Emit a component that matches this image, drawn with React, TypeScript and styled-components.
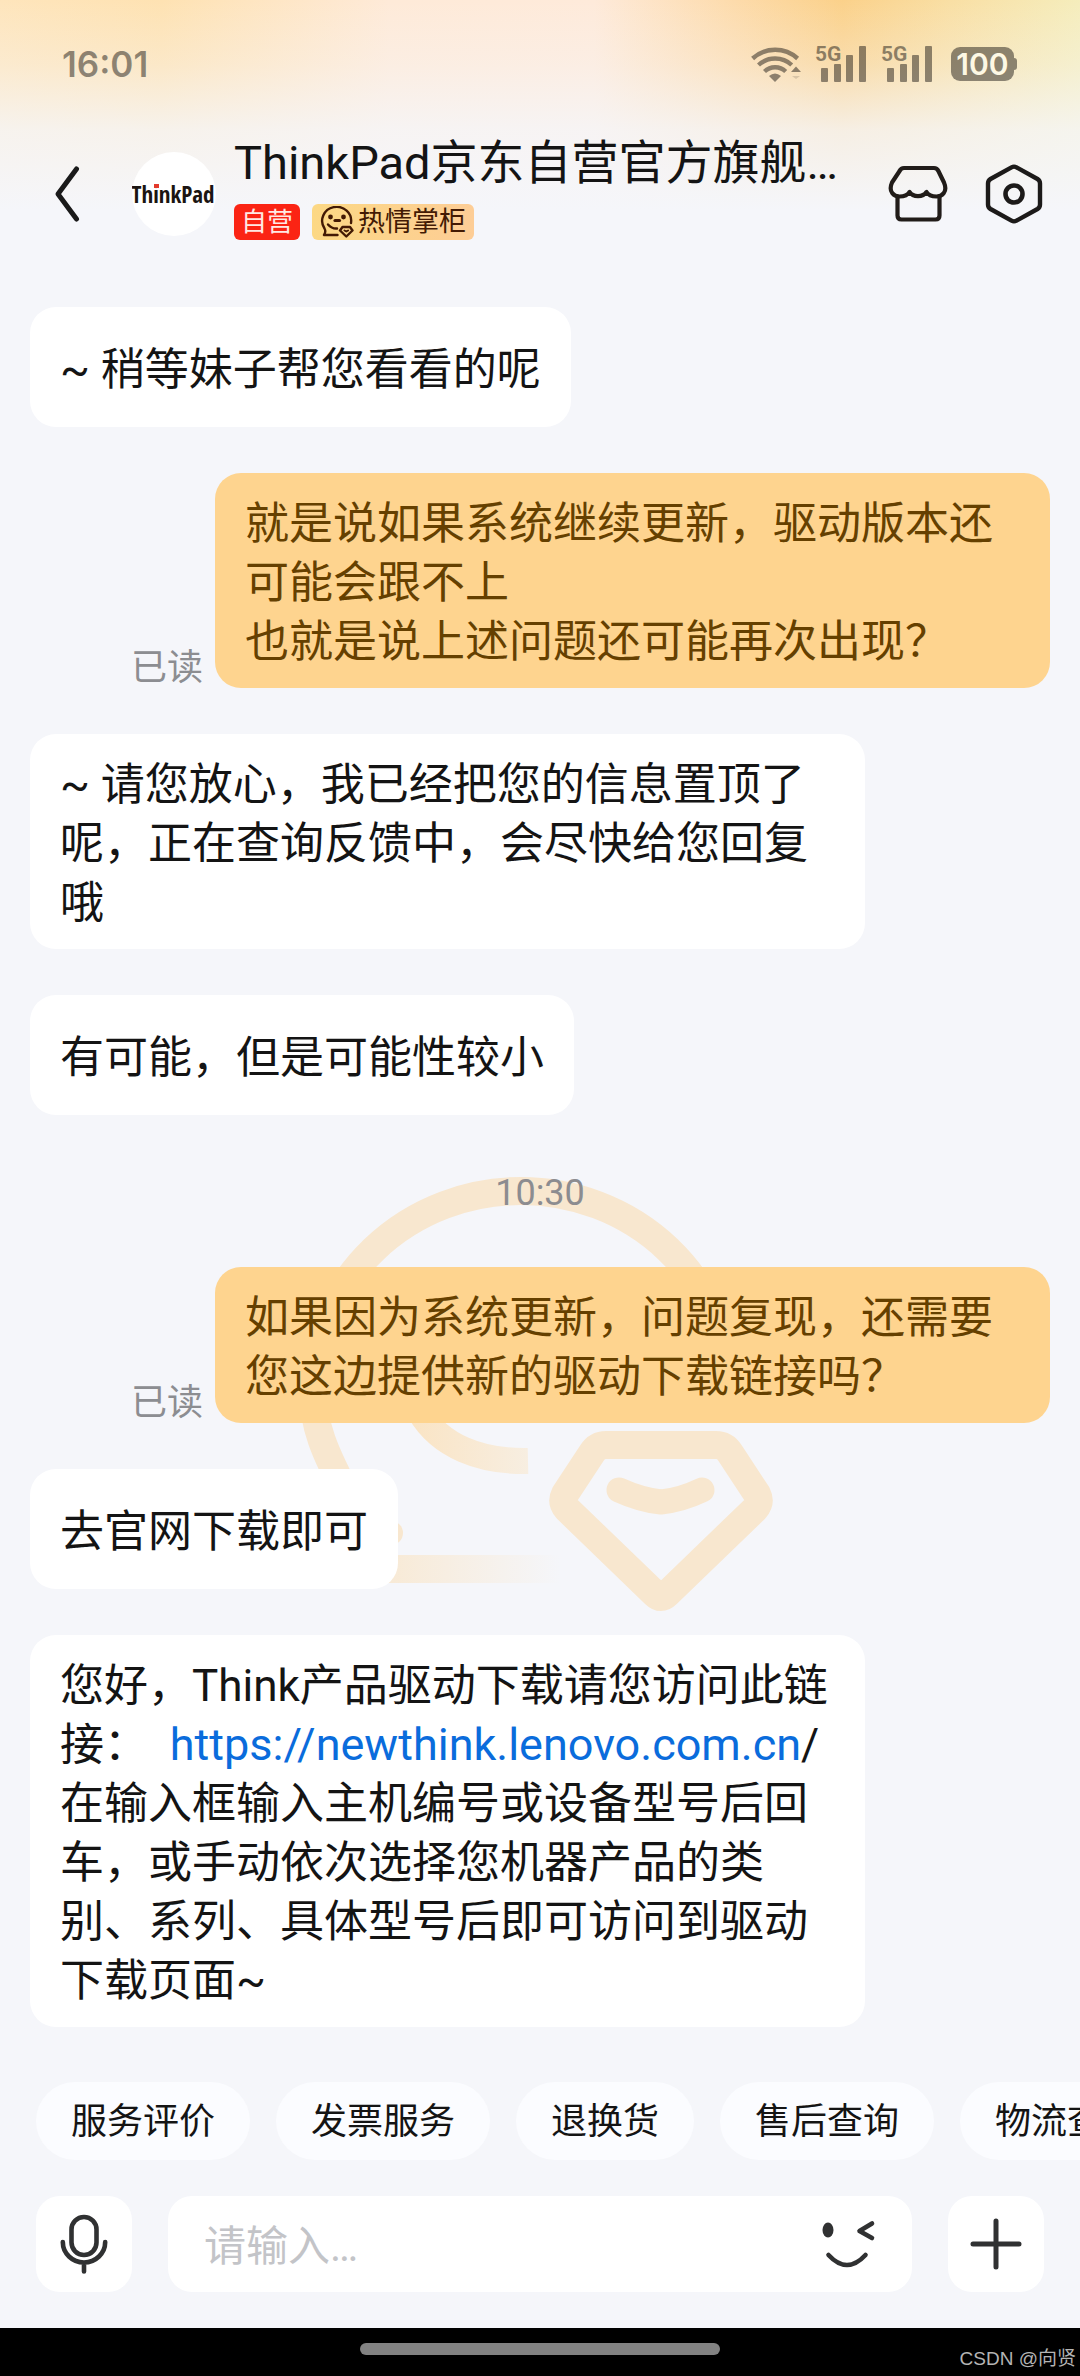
import React from "react";
import styled, { createGlobalStyle } from "styled-components";

const fontStack = `Roboto, "Noto Sans CJK SC", sans-serif`;
const statusInk = "rgba(32, 28, 24, 0.5)";

const GlobalStyle = createGlobalStyle`
  *, *::before, *::after { box-sizing: border-box; }
  body {
    margin: 0;
    background: #f5f6fa;
    font-family: ${fontStack};
    color: #141414;
  }
  button, input { font: inherit; color: inherit; }
`;

const Screen = styled.div`
  position: relative;
  display: flex;
  flex-direction: column;
  min-height: 100vh;
  overflow: hidden;
`;

const Top = styled.header`
  background:
    linear-gradient(to bottom, rgba(245, 246, 250, 0) 0, rgba(245, 246, 250, 0.3) 64px, rgba(245, 246, 250, 0.8) 130px, #f5f6fa 210px),
    linear-gradient(to right, #fee5bc 0%, #fee2b2 15%, #feead8 36%, #feeada 55%, #fddbab 68%, #fbd18a 78%, #f9dfa4 88%, #f5edbc 100%);
`;

const StatusBar = styled.div`
  display: flex;
  align-items: center;
  justify-content: space-between;
  height: 128px;
  padding: 0 66px 0 62px;
  color: ${statusInk};
`;

const Clock = styled.time`
  font: 600 35px/40px Inter, sans-serif;
`;

const StatusIcons = styled.div`
  display: flex;
  align-items: center;
`;

const Signal = styled.svg`
  display: block;
  margin-left: 12px;
  overflow: visible;
`;

const Battery = styled.span`
  position: relative;
  margin-left: 16px;
  width: 63px;
  height: 34px;
  border-radius: 9px;
  background: ${statusInk};
  color: #fdf8e4;
  font: 600 30px/34px Inter, sans-serif;
  text-align: center;

  &::after {
    content: "";
    position: absolute;
    top: 11px;
    right: -3px;
    width: 3px;
    height: 12px;
    border-radius: 0 3px 3px 0;
    background: ${statusInk};
  }
`;

const TitleBar = styled.div`
  display: flex;
  align-items: center;
  height: 132px;
  padding: 0 36px 0 54px;
`;

const BareButton = styled.button`
  flex: none;
  display: grid;
  place-items: center;
  padding: 0;
  border: 0;
  background: none;
  cursor: pointer;

  svg { display: block; }
`;

const Avatar = styled.div`
  flex: none;
  display: grid;
  place-items: center;
  width: 84px;
  height: 84px;
  margin: 0 18px 0 52px;
  border-radius: 50%;
  background: #fff;
`;

const Shop = styled.div`
  flex: 1;
  min-width: 0;
  padding-bottom: 13px;
`;

const ShopName = styled.h1`
  margin: 0 0 13px;
  font-size: 47px;
  font-weight: 400;
  line-height: 56px;
  white-space: nowrap;
`;

const Tags = styled.div`
  display: flex;
  gap: 12px;
`;

const Tag = styled.span<{ $tone: "red" | "gold" }>`
  display: flex;
  align-items: center;
  gap: 4px;
  height: 36px;
  padding: 0 ${(p) => (p.$tone === "red" ? 7 : 8)}px;
  border-radius: 6px;
  font-size: ${(p) => (p.$tone === "red" ? 26 : 27)}px;
  line-height: 36px;
  color: ${(p) => (p.$tone === "red" ? "#ffe9e4" : "#431a04")};
  background: ${(p) => (p.$tone === "red" ? "#fb2414" : "linear-gradient(to right, #fcd884, #fdcd96)")};
`;

const HeaderActions = styled.div`
  display: flex;
  gap: 36px;
`;

const Chat = styled.main`
  flex: 1;
  display: flex;
  flex-direction: column;
  gap: 46px;
  padding: 47px 30px 55px;
`;

const Watermark = styled.svg`
  position: absolute;
  top: 1160px;
  left: 50%;
  z-index: -1;
  margin-left: -260px;
`;

const Row = styled.div<{ $mine?: boolean }>`
  display: flex;
  align-items: flex-end;
  justify-content: ${(p) => (p.$mine ? "flex-end" : "flex-start")};
  gap: 12px;
`;

const Bubble = styled.p<{ $mine?: boolean }>`
  display: flex;
  flex-direction: column;
  justify-content: center;
  max-width: 835px;
  min-height: 120px;
  margin: 0;
  padding: 22px 30px 16px;
  border-radius: 26px;
  font-size: 44px;
  line-height: 59px;
  white-space: pre-wrap;
  background: ${(p) => (p.$mine ? "#fed48f" : "#fff")};
  color: ${(p) => (p.$mine ? "#654000" : "#141414")};
`;

const MessageLink = styled.a`
  color: #0a6cdc;
  font-size: 45px;
  line-height: 56px;
  text-decoration: none;
`;

const ReadMark = styled.span`
  color: #8c8d91;
  font-size: 36px;
  line-height: 40px;
`;

const TimeMark = styled.time`
  align-self: center;
  padding-top: 4px;
  color: #8c8c90;
  font-size: 36px;
  line-height: 56px;
`;

const Shortcuts = styled.nav`
  display: flex;
  gap: 26px;
  padding: 0 36px;
  overflow: hidden;
`;

const Chip = styled.button`
  flex: none;
  height: 78px;
  padding: 2px 35px 0;
  border: 0;
  border-radius: 39px;
  background: #fbfcff;
  font-size: 36px;
  line-height: 76px;
  cursor: pointer;
`;

const Composer = styled.form`
  display: flex;
  gap: 36px;
  padding: 36px;
`;

const SquareButton = styled(BareButton)`
  width: 96px;
  height: 96px;
  border-radius: 24px;
  background: #fff;
`;

const Field = styled.div`
  flex: 1;
  min-width: 0;
  display: flex;
  align-items: center;
  height: 96px;
  padding: 0 36px;
  border-radius: 24px;
  background: #fff;
`;

const FieldInput = styled.input`
  flex: 1;
  min-width: 0;
  height: 64px;
  padding: 4px 0 0;
  border: 0;
  outline: 0;
  background: none;
  font-size: 42px;
  line-height: 60px;

  &::placeholder { color: #c3c4c8; opacity: 1; }
`;

const SystemBar = styled.footer`
  position: relative;
  display: flex;
  justify-content: center;
  height: 48px;
  padding-top: 15px;
  background: #000;
`;

const Handle = styled.div`
  width: 33.333%;
  height: 12px;
  border-radius: 6px;
  background: #828282;
`;

const Credit = styled.small`
  position: absolute;
  right: 4px;
  bottom: 5px;
  color: #b4b4b4;
  font: 19px/24px "Liberation Sans", "Noto Sans CJK SC", sans-serif;
`;

const WifiIcon = () => (
  <svg width="52" height="38" viewBox="0 0 52 38" fill="none" stroke="currentColor" strokeWidth="4.4">
    <path d="M1.6 13.5a33.500 33.500 0 0 1 45 0" />
    <path d="M7.500 20a24.500 24.500 0 0 1 33.200 0" />
    <path d="M13.500 26.500a15.500 15.500 0 0 1 21.200 0" />
    <path d="M18 31q6-5 12 0l-6 6z" fill="currentColor" stroke="none" />
    <path d="M40 27l5-5.500 5 5.500z" fill="currentColor" stroke="none" />
    <path d="M41 31h8l-4 3z" fill="currentColor" stroke="none" opacity="0.3" />
  </svg>
);

const SignalIcon = () => (
  <Signal width="54" height="38" viewBox="0 0 54 38" fill="currentColor">
    <text x="0" y="16" fontSize="21" fontWeight="700" fontFamily="'Liberation Sans Narrow', Roboto, sans-serif">5G</text>
    <rect x="6" y="23" width="7" height="14" rx="1" />
    <rect x="19" y="19" width="7" height="18" rx="1" />
    <rect x="31" y="10" width="7" height="27" rx="1" />
    <rect x="44" y="1" width="7" height="36" rx="1" />
  </Signal>
);

const BackIcon = () => (
  <svg width="26" height="58" viewBox="0 0 26 58" fill="none" stroke="#1a1a1a" strokeWidth="5" strokeLinecap="round" strokeLinejoin="round">
    <path d="M22.500 4L4 29l18.500 25" />
  </svg>
);

const BrandMark = () => (
  <svg width="84" height="40" viewBox="0 0 84 40" role="img" aria-label="ThinkPad">
    <text x="41" y="29" textAnchor="middle" fontSize="23" fontWeight="700" fill="#1b1512" fontFamily="'Liberation Sans Narrow', 'Open Sans Condensed', Roboto, sans-serif">ThinkPad</text>
    <rect x="22" y="10" width="5" height="4" fill="#e33a2c" />
  </svg>
);

const FaceBadgeIcon = () => (
  <svg width="34" height="32" viewBox="0 0 34 32" fill="none" stroke="#431a04" strokeWidth="2.400" strokeLinecap="round" strokeLinejoin="round">
    <path d="M31 17A14.500 14 0 1 0 4.500 22.500q1.800 3-.5 6.500h13.500" />
    <path d="M8 18.500q4 4.500 9 4" />
    <path d="M15 14.500h4.500" strokeWidth="3.200" />
    <circle cx="10.500" cy="11" r="1.200" fill="#431a04" />
    <circle cx="23.500" cy="11" r="1.200" fill="#431a04" />
    <path d="M22.500 21h7.500l2.500 3.500-6.200 6-6.300-6z" />
    <path d="M24.500 24.500l1.800 1 1.800-1" strokeWidth="2" />
  </svg>
);

const StoreIcon = () => (
  <svg width="60" height="60" viewBox="0 0 60 60" fill="none" stroke="#211c19" strokeWidth="4.200" strokeLinejoin="round" strokeLinecap="round">
    <path d="M16 4H46q3 0 4.400 3L56 18.500C60 28 54 32.500 48.500 32.500c-5 0-8-1-10-4.500-3.500 5.500-13.500 5.500-17 0-2 3.500-5 4.500-10 4.500C6 32.500 0 28 4 18.500L11.600 7Q13 4 16 4z" />
    <path d="M9.500 32.500V51.500q0 4 4 4h34q4 0 4-4V32.500" />
  </svg>
);

const HexIcon = () => (
  <svg width="60" height="60" viewBox="0 0 60 60" fill="none" stroke="#1c1a19" strokeLinejoin="round">
    <path d="M27.500 3.300q2.500-1.400 5 0l21 11.700q2.500 1.500 2.500 4.500v21q0 3-2.500 4.500l-21 11.700q-2.500 1.400-5 0L6.500 45Q4 43.500 4 40.500v-21Q4 16.500 6.500 15z" strokeWidth="4.400" />
    <circle cx="30" cy="30" r="8.500" strokeWidth="4.600" />
  </svg>
);

const MicIcon = () => (
  <svg width="48" height="60" viewBox="0 0 48 60" fill="none" stroke="#303132" strokeWidth="4.600" strokeLinecap="round">
    <rect x="11.500" y="3" width="25" height="38" rx="12.500" />
    <path d="M2.800 28a21.200 20.500 0 0 0 42.400 0M24 49v8.500" />
  </svg>
);

const WinkIcon = () => (
  <svg width="56" height="50" viewBox="0 0 56 50" fill="none" stroke="#303132" strokeWidth="4.600" strokeLinecap="round" strokeLinejoin="round">
    <ellipse cx="8" cy="11" rx="5.500" ry="7.500" fill="#303132" stroke="none" />
    <path d="M52 4.500L39.500 12 52 19" />
    <path d="M8.500 36q18.500 20 37 0" />
  </svg>
);

const PlusIcon = () => (
  <svg width="52" height="52" viewBox="0 0 52 52" fill="none" stroke="#303132" strokeWidth="5" strokeLinecap="round">
    <path d="M26 3v46M3 26h46" />
  </svg>
);

const FaceWatermark = () => (
  <Watermark width="520" height="460" viewBox="280 1160 520 460" fill="none" stroke="#f8e7cf" strokeWidth="28" strokeLinejoin="round" aria-hidden="true">
    <defs>
      <linearGradient id="fadeLine" gradientUnits="userSpaceOnUse" x1="390" y1="0" x2="560" y2="0">
        <stop offset="0" stopColor="#f8ead6" />
        <stop offset="1" stopColor="#f5f6fa" />
      </linearGradient>
      <linearGradient id="fadeMouth" gradientUnits="userSpaceOnUse" x1="410" y1="0" x2="540" y2="0">
        <stop offset="0" stopColor="#fae4c4" />
        <stop offset="1" stopColor="#f7efe4" />
      </linearGradient>
    </defs>
    <path d="M729 1390A208 199 0 0 0 313 1390C313 1425 324 1452 350 1500" />
    <path d="M420 1412C440 1446 480 1462 528 1461" stroke="url(#fadeMouth)" strokeWidth="26" />
    <path d="M380 1533h11" strokeWidth="24" strokeLinecap="round" />
    <path d="M360 1569H560" stroke="url(#fadeLine)" />
    <path d="M606 1445h110q9 0 14 8l27 41q4 8-2 15l-88 85q-6 6-12 0l-88-85q-6-7-2-15l27-41q5-8 14-8z" />
    <path d="M619 1490q22 10 42 12 20-2 41-12" strokeWidth="25" strokeLinecap="round" />
  </Watermark>
);

type Message =
  | { kind: "theirs" | "mine"; body: React.ReactNode }
  | { kind: "time"; body: string };

const messages: Message[] = [
  { kind: "theirs", body: "~ 稍等妹子帮您看看的呢" },
  { kind: "mine", body: "就是说如果系统继续更新，驱动版本还可能会跟不上\n也就是说上述问题还可能再次出现？" },
  { kind: "theirs", body: "~ 请您放心，我已经把您的信息置顶了呢，正在查询反馈中，会尽快给您回复哦" },
  { kind: "theirs", body: "有可能，但是可能性较小" },
  { kind: "time", body: "10:30" },
  { kind: "mine", body: "如果因为系统更新，问题复现，还需要您这边提供新的驱动下载链接吗？" },
  { kind: "theirs", body: "去官网下载即可" },
  {
    kind: "theirs",
    body: (
      <>
        您好，Think产品驱动下载请您访问此链接：{"  "}
        <MessageLink href="https://newthink.lenovo.com.cn">https://newthink.lenovo.com.cn</MessageLink>
        {"/\n"}在输入框输入主机编号或设备型号后回车，或手动依次选择您机器产品的类别、系列、具体型号后即可访问到驱动下载页面~
      </>
    ),
  },
];

const shortcuts = ["服务评价", "发票服务", "退换货", "售后查询", "物流查询"];

export default function App() {
  return (
    <Screen>
      <GlobalStyle />
      <FaceWatermark />
      <Top>
        <StatusBar>
          <Clock>16:01</Clock>
          <StatusIcons>
            <WifiIcon />
            <SignalIcon />
            <SignalIcon />
            <Battery>100</Battery>
          </StatusIcons>
        </StatusBar>
        <TitleBar>
          <BareButton type="button" aria-label="返回"><BackIcon /></BareButton>
          <Avatar><BrandMark /></Avatar>
          <Shop>
            <ShopName>ThinkPad京东自营官方旗舰…</ShopName>
            <Tags>
              <Tag $tone="red">自营</Tag>
              <Tag $tone="gold"><FaceBadgeIcon />热情掌柜</Tag>
            </Tags>
          </Shop>
          <HeaderActions>
            <BareButton type="button" aria-label="店铺"><StoreIcon /></BareButton>
            <BareButton type="button" aria-label="设置"><HexIcon /></BareButton>
          </HeaderActions>
        </TitleBar>
      </Top>

      <Chat>
        {messages.map((m, i) =>
          m.kind === "time" ? (
            <TimeMark key={i}>{m.body}</TimeMark>
          ) : (
            <Row key={i} $mine={m.kind === "mine"}>
              {m.kind === "mine" && <ReadMark>已读</ReadMark>}
              <Bubble $mine={m.kind === "mine"}><span>{m.body}</span></Bubble>
            </Row>
          )
        )}
      </Chat>

      <Shortcuts aria-label="快捷服务">
        {shortcuts.map((label) => (
          <Chip key={label} type="button">{label}</Chip>
        ))}
      </Shortcuts>

      <Composer onSubmit={(e) => e.preventDefault()}>
        <SquareButton type="button" aria-label="语音"><MicIcon /></SquareButton>
        <Field>
          <FieldInput type="text" aria-label="请输入" placeholder="请输入…" />
          <BareButton type="button" aria-label="表情"><WinkIcon /></BareButton>
        </Field>
        <SquareButton type="button" aria-label="更多"><PlusIcon /></SquareButton>
      </Composer>

      <SystemBar>
        <Handle />
        <Credit>CSDN @向贤</Credit>
      </SystemBar>
    </Screen>
  );
}
